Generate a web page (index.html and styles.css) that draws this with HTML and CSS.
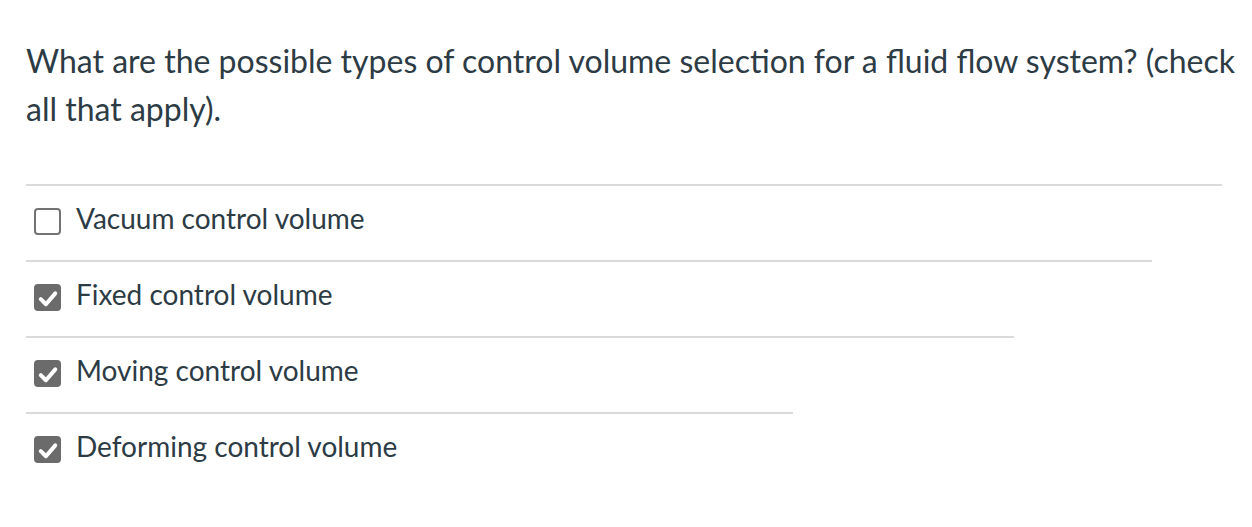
FILE: index.html
```html
<!DOCTYPE html>
<html lang="en">
<head>
<meta charset="utf-8">
<title>Question</title>
<link rel="stylesheet" href="styles.css">
</head>
<body>
<div class="question">
  <p class="question-text">What are the possible types of control volume selection for a fluid flow system? (check all that apply).</p>
  <ul class="answers">
    <li class="answer answer-1">
      <span class="box"></span>
      <span class="label">Vacuum control volume</span>
    </li>
    <li class="answer answer-2">
      <span class="box checked"><svg viewBox="0 0 26 26" width="26" height="26"><path d="M6.5 14.5 L11.5 19.5 L20.5 9" fill="none" stroke="#fff" stroke-width="3.8" stroke-linecap="round" stroke-linejoin="round"/></svg></span>
      <span class="label">Fixed control volume</span>
    </li>
    <li class="answer answer-3">
      <span class="box checked"><svg viewBox="0 0 26 26" width="26" height="26"><path d="M6.5 14.5 L11.5 19.5 L20.5 9" fill="none" stroke="#fff" stroke-width="3.8" stroke-linecap="round" stroke-linejoin="round"/></svg></span>
      <span class="label">Moving control volume</span>
    </li>
    <li class="answer answer-4">
      <span class="box checked"><svg viewBox="0 0 26 26" width="26" height="26"><path d="M6.5 14.5 L11.5 19.5 L20.5 9" fill="none" stroke="#fff" stroke-width="3.8" stroke-linecap="round" stroke-linejoin="round"/></svg></span>
      <span class="label">Deforming control volume</span>
    </li>
  </ul>
</div>
</body>
</html>
```
FILE: styles.css
```css
html, body {
  margin: 0;
  padding: 0;
  background: #ffffff;
}

body {
  font-family: Lato, "Open Sans", "Liberation Sans", sans-serif;
  color: #2d3b45;
}

.question {
  padding: 37px 0 0 26px;
}

.question-text {
  margin: 0;
  font-size: 32px;
  line-height: 48px;
}

.answers {
  list-style: none;
  margin: 51px 0 0 0;
  padding: 0;
}

.answer {
  display: flex;
  align-items: flex-start;
  border-top: 2px solid #dadada;
  padding: 16px 0 25px 8px;
}

.answer-1 { width: 1188px; }
.answer-2 { width: 1118px; }
.answer-3 { width: 980px; }
.answer-4 { width: 759px; }

.box {
  flex: none;
  box-sizing: border-box;
  width: 27px;
  height: 27px;
  margin-top: 6px;
  border: 2px solid #737373;
  border-radius: 4px;
  background: #fff;
}

.box.checked {
  border: none;
  background: #6b6b6b;
}

.box svg {
  display: block;
  width: 27px;
  height: 27px;
}

.label {
  margin-left: 15px;
  font-size: 28px;
  line-height: 32px;
}
```
